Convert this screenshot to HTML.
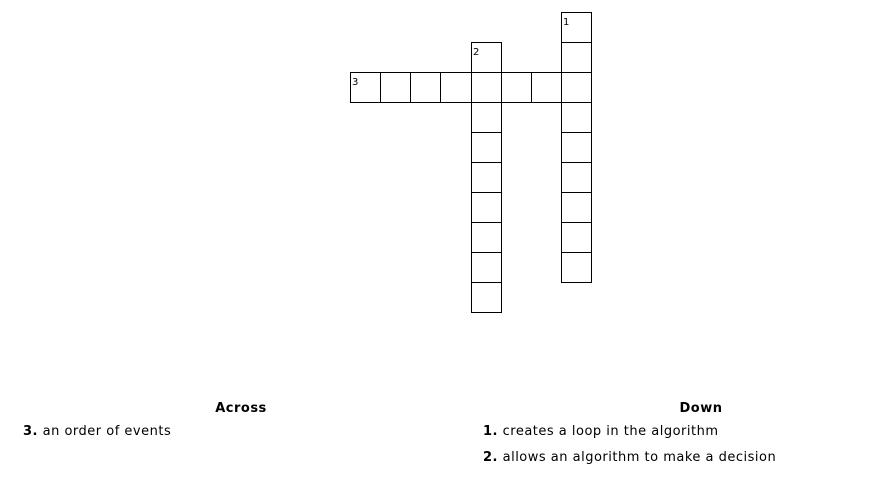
<!DOCTYPE html>
<html><head><meta charset="utf-8"><style>
body{margin:0;width:879px;height:494px;background:#fff;font-family:"DejaVu Sans","Liberation Sans",sans-serif;font-size:13px;color:#000;position:relative;overflow:hidden}
.t{position:absolute;white-space:nowrap;letter-spacing:0.5px}
.h{font-weight:bold;transform:translateX(-50%)}
svg{position:absolute;left:0;top:0}
svg text{font-family:"DejaVu Sans",sans-serif;font-size:10px}
</style></head><body>
<svg width="879" height="330" shape-rendering="crispEdges">
<g fill="none" stroke="#000" stroke-width="1">
<rect x="561.5" y="12.5" width="30" height="270"/>
<line x1="561" y1="42.5" x2="592" y2="42.5"/>
<line x1="561" y1="132.5" x2="592" y2="132.5"/>
<line x1="561" y1="162.5" x2="592" y2="162.5"/>
<line x1="561" y1="192.5" x2="592" y2="192.5"/>
<line x1="561" y1="222.5" x2="592" y2="222.5"/>
<line x1="561" y1="252.5" x2="592" y2="252.5"/>
<rect x="471.5" y="42.5" width="30" height="270"/>
<line x1="471" y1="132.5" x2="502" y2="132.5"/>
<line x1="471" y1="162.5" x2="502" y2="162.5"/>
<line x1="471" y1="192.5" x2="502" y2="192.5"/>
<line x1="471" y1="222.5" x2="502" y2="222.5"/>
<line x1="471" y1="252.5" x2="502" y2="252.5"/>
<line x1="471" y1="282.5" x2="502" y2="282.5"/>
<rect x="350.5" y="72.5" width="241" height="30"/>
<line x1="380.5" y1="72" x2="380.5" y2="103"/>
<line x1="410.5" y1="72" x2="410.5" y2="103"/>
<line x1="440.5" y1="72" x2="440.5" y2="103"/>
<line x1="531.5" y1="72" x2="531.5" y2="103"/>
<line x1="561" y1="102.5" x2="592" y2="102.5"/>
<line x1="471" y1="102.5" x2="502" y2="102.5"/>
</g>
<text x="563" y="25">1</text>
<text x="473" y="55">2</text>
<text x="352" y="85">3</text>
</svg>
<div class="t h" style="left:241px;top:401px">Across</div>
<div class="t" style="left:23px;top:424px"><b>3.</b> an order of events</div>
<div class="t h" style="left:701px;top:401px">Down</div>
<div class="t" style="left:483px;top:424px"><b>1.</b> creates a loop in the algorithm</div>
<div class="t" style="left:483px;top:450px"><b>2.</b> allows an algorithm to make a decision</div>
</body></html>
